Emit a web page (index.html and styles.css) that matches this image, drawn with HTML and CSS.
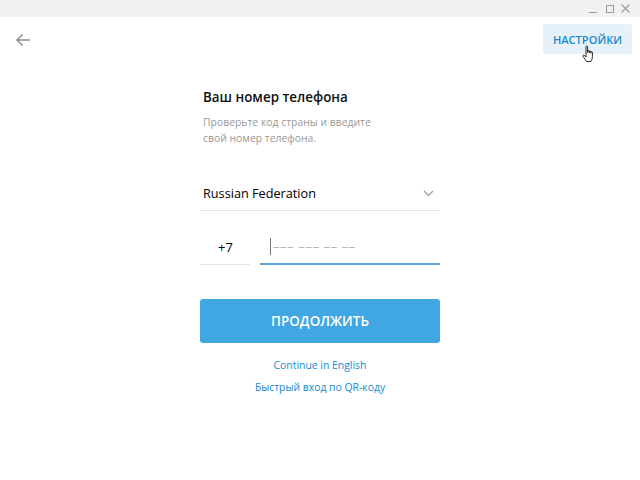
FILE: index.html
```html
<!DOCTYPE html>
<html lang="ru">
<head>
<meta charset="utf-8">
<title>Telegram</title>
<link rel="stylesheet" href="styles.css">
</head>
<body>
<div class="window">
  <div class="titlebar">
    <span class="ctl ctl-min"></span>
    <span class="ctl ctl-max"></span>
    <svg class="ctl-close" width="9" height="9" viewBox="0 0 9 9"><path d="M0.5 0.5 L8.5 8.5 M8.5 0.5 L0.5 8.5" stroke="#9a9a9a" stroke-width="1.1" fill="none"/></svg>
  </div>
  <div class="topbar">
    <svg class="back" width="16" height="14" viewBox="0 0 16 14"><path d="M15 7 H2 M7.5 1.5 L2 7 L7.5 12.5" stroke="#8e8e8e" stroke-width="1.5" fill="none"/></svg>
    <div class="settings">НАСТРОЙКИ
      <svg class="hand" width="14" height="18" viewBox="0 0 14 18"><path d="M4 1.5 C4 0.8 5.6 0.8 5.6 1.5 V7.5 V6 C5.6 5.3 7.2 5.3 7.2 6 V7.8 V6.6 C7.2 5.9 8.8 5.9 8.8 6.6 V8.2 V7.3 C8.8 6.6 10.4 6.6 10.4 7.3 V11.5 C10.4 14 9.5 15.5 9 16.5 H4.5 C3.5 15 2 13 1 11.2 C0.6 10.4 1.6 9.6 2.4 10.3 L4 12 Z" fill="#fff" stroke="#111" stroke-width="0.9" stroke-linejoin="round"/></svg>
    </div>
  </div>
  <main class="form">
    <h1 class="title">Ваш номер телефона</h1>
    <p class="desc">Проверьте код страны и введите<br>свой номер телефона.</p>
    <div class="country">
      <span>Russian Federation</span>
      <svg width="11" height="7" viewBox="0 0 11 7"><path d="M1 1 L5.5 5.5 L10 1" stroke="#a0a0a0" stroke-width="1.3" fill="none"/></svg>
    </div>
    <div class="phone">
      <div class="code">+7</div>
      <div class="number"><span class="caret"></span><span class="placeholder">––– ––– –– ––</span></div>
    </div>
    <button class="submit">ПРОДОЛЖИТЬ</button>
    <a class="link link-en">Continue in English</a>
    <a class="link link-qr">Быстрый вход по QR-коду</a>
  </main>
</div>
</body>
</html>
```
FILE: styles.css
```css
* { box-sizing: border-box; }
html, body { margin: 0; padding: 0; background: #fff; }
body { font-family: "Open Sans", "Noto Sans", sans-serif; width: 640px; height: 480px; overflow: hidden; }
.window { width: 640px; height: 480px; display: flex; flex-direction: column; }
.titlebar { height: 17px; background: #f1f1f1; display: flex; justify-content: flex-end; align-items: center; padding-right: 10px; }
.ctl { display: block; }
.ctl-min { width: 8px; height: 1px; background: #9a9a9a; margin-top: 8px; margin-right: 9px; }
.ctl-max { width: 8px; height: 8px; border: 1px solid #9a9a9a; margin-right: 7px; }
.ctl-close { display: block; }
.topbar { height: 45px; display: flex; justify-content: space-between; align-items: center; padding: 0 8px 0 15px; }
.back { display: block; }
.settings { position: relative; background: #e6f1fa; color: #168acd; font-weight: 600; font-size: 11.1px; height: 30px; width: 89px; justify-content: center; display: flex; align-items: center; margin-top: -1px; border-radius: 2px; }
.hand { position: absolute; left: 39px; top: 21px; }
.form { width: 240px; margin: 0 auto; display: flex; flex-direction: column; padding-top: 24px; }
.title { margin: 0 0 0 3px; font-size: 13.4px; font-weight: 600; color: #111; line-height: 22px; }
.desc { margin: 6px 0 0 3px; font-size: 10.4px; color: #999; line-height: 16px; }
.country { margin-top: 30px; height: 35px; border-bottom: 1px solid #e5e5e5; display: flex; justify-content: space-between; align-items: center; padding: 0 6px 0 3px; font-size: 12.7px; color: #000; }
.phone { display: flex; gap: 10px; margin-top: 18px; }
.code { width: 50px; height: 36px; border-bottom: 1px solid #e5e5e5; font-size: 13px; padding-left: 18px; display: flex; align-items: center; }
.number { flex: 1; height: 36px; border-bottom: 2px solid #5aa5d6; display: flex; align-items: center; padding-left: 10px; }
.caret { width: 1px; height: 17px; background: #777; margin-right: 2px; }
.placeholder { color: #b5b5b5; font-size: 13px; letter-spacing: 0.6px; }
.submit { margin-top: 34px; height: 44px; border: none; border-radius: 3px; background: #40a7e3; color: #fff; font-family: inherit; font-weight: 600; font-size: 13.5px; padding: 0; }
.link { color: #168acd; font-size: 10.4px; text-align: center; line-height: 16px; }
.link-en { margin-top: 14px; }
.link-qr { margin-top: 6px; }
```
